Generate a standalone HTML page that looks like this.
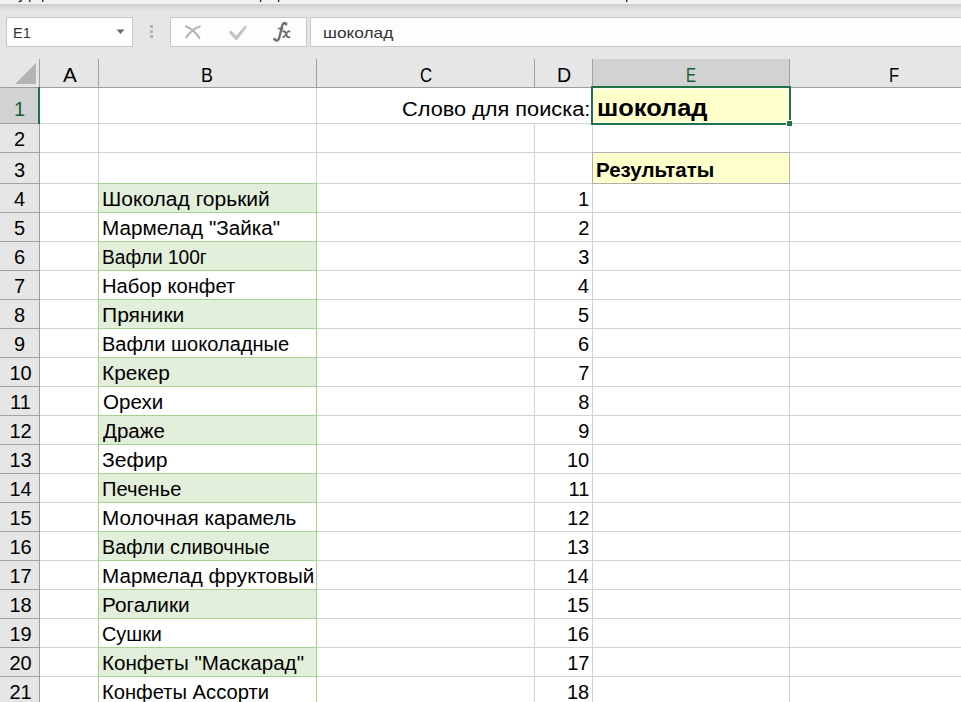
<!DOCTYPE html>
<html><head><meta charset="utf-8"><style>
html,body{margin:0;padding:0;}
body{width:961px;height:702px;overflow:hidden;position:relative;background:#e6e6e6;font-family:"Liberation Sans", sans-serif;}
</style></head><body>
<div style="position:absolute;left:0px;top:0px;width:961px;height:4px;background:#f3f2f1"></div>
<div style="position:absolute;left:0px;top:4px;width:961px;height:1px;background:#cccbca"></div>
<div style="position:absolute;left:0px;top:5px;width:961px;height:1px;background:#d2d2d2"></div>
<div style="position:absolute;left:0px;top:6px;width:961px;height:1px;background:#d6d6d6"></div>
<div style="position:absolute;left:0px;top:7px;width:961px;height:1px;background:#dadada"></div>
<div style="position:absolute;left:0px;top:8px;width:961px;height:1px;background:#dfdfdf"></div>
<div style="position:absolute;left:0px;top:9px;width:961px;height:1px;background:#e2e2e2"></div>
<svg style="position:absolute;left:0;top:0" width="961" height="4"><g stroke="#2a2a2a" stroke-width="1.4" fill="none" stroke-linecap="round"><path d="M21.3 -1 Q21.6 1.6 19.2 1.5"/><path d="M29.8 -1 L29.8 1.4"/><path d="M42.7 -1 L42.7 1.4"/><path d="M260.6 -1 L260.6 1.4"/><path d="M278.6 -1 L278.6 1.4"/><path d="M626.7 -1 L626.7 1.6"/></g></svg>
<div style="position:absolute;left:6px;top:17px;width:127px;height:30px;background:#fff;border:1px solid #c6c6c6;box-sizing:border-box"></div>
<div style="position:absolute;left:12.62px;top:33.23px;height:0;line-height:0;font-size:15.5px;color:#333;white-space:pre;transform:scaleX(0.9392);transform-origin:left 0;">E1</div>
<svg style="position:absolute;left:116px;top:29px" width="10" height="6"><path d="M0.5 0.5 L8.5 0.5 L4.5 5 Z" fill="#666"/></svg>
<div style="position:absolute;left:150px;top:25px;width:3px;height:3px;background:#b4b4b4"></div>
<div style="position:absolute;left:150px;top:30px;width:3px;height:3px;background:#b4b4b4"></div>
<div style="position:absolute;left:150px;top:35px;width:3px;height:3px;background:#b4b4b4"></div>
<div style="position:absolute;left:170px;top:17px;width:137px;height:30px;background:#fdfdfd;border:1px solid #c6c6c6;box-sizing:border-box"></div>
<svg style="position:absolute;left:180px;top:20px" width="25" height="25"><g stroke="#b6b6b6" fill="none" stroke-linecap="round"><path d="M6.1 6.4 Q12.9 8.6 19.4 17.9" stroke-width="2.1"/><path d="M6.3 17.4 Q12.5 8.7 19.8 6.6" stroke-width="2.1"/></g></svg>
<svg style="position:absolute;left:226px;top:20px" width="25" height="25"><g fill="#c2c2c2" stroke="#c2c2c2" stroke-linecap="round" stroke-linejoin="round"><path d="M4.9 12.5 L10.3 18.3" stroke-width="3.3" fill="none"/><path d="M9.21 17.32 L19.28 5.89 L20.52 6.9 L11.39 19.08 Z" stroke-width="0.8"/></g></svg>
<svg style="position:absolute;left:260px;top:15px" width="40" height="32"><g stroke="#6e6e6e" fill="none" stroke-linecap="round"><path d="M14.6 24.0 Q15.2 25.9 17.2 25.5 Q18.9 25.0 19.6 21.5 L21.6 12.5 Q22.6 8.2 24.6 7.9 Q25.9 7.8 26.2 8.9" stroke-width="2.3"/><path d="M18.4 13.5 L22.8 13.5" stroke-width="1.5"/><path d="M23.0 16.4 Q24.5 15.6 25.6 17.6 L27.2 21.6 Q28.0 22.9 29.4 22.0" stroke-width="1.9"/><path d="M29.6 16.6 Q28.6 15.6 27.2 17.3 L24.9 20.9 Q24.0 22.6 23.0 21.9" stroke-width="1.7"/></g><circle cx="14.7" cy="24.2" r="1.3" fill="#6e6e6e"/><circle cx="26.0" cy="9.3" r="1.3" fill="#6e6e6e"/></svg>
<div style="position:absolute;left:310px;top:17px;width:660px;height:30px;background:#fdfdfd;border:1px solid #c6c6c6;box-sizing:border-box"></div>
<div style="position:absolute;left:323.25px;top:32.80px;height:0;line-height:0;font-size:15px;color:#333;white-space:pre;transform:scaleX(1.1537);transform-origin:left 0;">шоколад</div>
<div style="position:absolute;left:0px;top:59px;width:961px;height:28px;background:#e6e6e6"></div>
<svg style="position:absolute;left:0;top:0" width="40" height="90"><path d="M36 63 L36 84 L15 84 Z" fill="#b4b4b4"/></svg>
<div style="position:absolute;left:593px;top:59px;width:196px;height:28px;background:#d2d2d2"></div>
<div style="position:absolute;left:98px;top:59px;width:1px;height:28px;background:#a0a0a0"></div>
<div style="position:absolute;left:62.65px;top:75.07px;height:0;line-height:0;font-size:20px;color:#000;white-space:pre;transform:scaleX(1.0332);transform-origin:left 0;">A</div>
<div style="position:absolute;left:316px;top:59px;width:1px;height:28px;background:#a0a0a0"></div>
<div style="position:absolute;left:201.33px;top:75.07px;height:0;line-height:0;font-size:20px;color:#000;white-space:pre;transform:scaleX(0.8906);transform-origin:left 0;">B</div>
<div style="position:absolute;left:534px;top:59px;width:1px;height:28px;background:#a0a0a0"></div>
<div style="position:absolute;left:419.93px;top:75.07px;height:0;line-height:0;font-size:20px;color:#000;white-space:pre;transform:scaleX(0.8373);transform-origin:left 0;">C</div>
<div style="position:absolute;left:592px;top:59px;width:1px;height:28px;background:#a0a0a0"></div>
<div style="position:absolute;left:556.88px;top:75.07px;height:0;line-height:0;font-size:20px;color:#000;white-space:pre;transform:scaleX(0.9824);transform-origin:left 0;">D</div>
<div style="position:absolute;left:789px;top:59px;width:1px;height:28px;background:#a0a0a0"></div>
<div style="position:absolute;left:1000px;top:59px;width:1px;height:28px;background:#a0a0a0"></div>
<div style="position:absolute;left:888.60px;top:75.07px;height:0;line-height:0;font-size:20px;color:#000;white-space:pre;transform:scaleX(0.8295);transform-origin:left 0;">F</div>
<div style="position:absolute;left:39px;top:59px;width:1px;height:28px;background:#a0a0a0"></div>
<div style="position:absolute;left:0px;top:87px;width:961px;height:1px;background:#9e9e9e"></div>
<div style="position:absolute;left:40px;top:88px;width:921px;height:614px;background:#fff"></div>
<div style="position:absolute;left:0px;top:88px;width:39px;height:614px;background:#e6e6e6"></div>
<div style="position:absolute;left:0px;top:88px;width:39px;height:35px;background:#d2d2d2"></div>
<div style="position:absolute;left:98px;top:88px;width:1px;height:614px;background:#d4d4d4"></div>
<div style="position:absolute;left:316px;top:88px;width:1px;height:614px;background:#d4d4d4"></div>
<div style="position:absolute;left:534px;top:88px;width:1px;height:614px;background:#d4d4d4"></div>
<div style="position:absolute;left:592px;top:88px;width:1px;height:614px;background:#d4d4d4"></div>
<div style="position:absolute;left:789px;top:88px;width:1px;height:614px;background:#d4d4d4"></div>
<div style="position:absolute;left:40px;top:123px;width:921px;height:1px;background:#d4d4d4"></div>
<div style="position:absolute;left:0px;top:123px;width:39px;height:1px;background:#a3a3a3"></div>
<div style="position:absolute;left:40px;top:152px;width:921px;height:1px;background:#d4d4d4"></div>
<div style="position:absolute;left:0px;top:152px;width:39px;height:1px;background:#a3a3a3"></div>
<div style="position:absolute;left:40px;top:183px;width:921px;height:1px;background:#d4d4d4"></div>
<div style="position:absolute;left:0px;top:183px;width:39px;height:1px;background:#a3a3a3"></div>
<div style="position:absolute;left:40px;top:212px;width:921px;height:1px;background:#d4d4d4"></div>
<div style="position:absolute;left:0px;top:212px;width:39px;height:1px;background:#a3a3a3"></div>
<div style="position:absolute;left:40px;top:241px;width:921px;height:1px;background:#d4d4d4"></div>
<div style="position:absolute;left:0px;top:241px;width:39px;height:1px;background:#a3a3a3"></div>
<div style="position:absolute;left:40px;top:270px;width:921px;height:1px;background:#d4d4d4"></div>
<div style="position:absolute;left:0px;top:270px;width:39px;height:1px;background:#a3a3a3"></div>
<div style="position:absolute;left:40px;top:299px;width:921px;height:1px;background:#d4d4d4"></div>
<div style="position:absolute;left:0px;top:299px;width:39px;height:1px;background:#a3a3a3"></div>
<div style="position:absolute;left:40px;top:328px;width:921px;height:1px;background:#d4d4d4"></div>
<div style="position:absolute;left:0px;top:328px;width:39px;height:1px;background:#a3a3a3"></div>
<div style="position:absolute;left:40px;top:357px;width:921px;height:1px;background:#d4d4d4"></div>
<div style="position:absolute;left:0px;top:357px;width:39px;height:1px;background:#a3a3a3"></div>
<div style="position:absolute;left:40px;top:386px;width:921px;height:1px;background:#d4d4d4"></div>
<div style="position:absolute;left:0px;top:386px;width:39px;height:1px;background:#a3a3a3"></div>
<div style="position:absolute;left:40px;top:415px;width:921px;height:1px;background:#d4d4d4"></div>
<div style="position:absolute;left:0px;top:415px;width:39px;height:1px;background:#a3a3a3"></div>
<div style="position:absolute;left:40px;top:444px;width:921px;height:1px;background:#d4d4d4"></div>
<div style="position:absolute;left:0px;top:444px;width:39px;height:1px;background:#a3a3a3"></div>
<div style="position:absolute;left:40px;top:473px;width:921px;height:1px;background:#d4d4d4"></div>
<div style="position:absolute;left:0px;top:473px;width:39px;height:1px;background:#a3a3a3"></div>
<div style="position:absolute;left:40px;top:502px;width:921px;height:1px;background:#d4d4d4"></div>
<div style="position:absolute;left:0px;top:502px;width:39px;height:1px;background:#a3a3a3"></div>
<div style="position:absolute;left:40px;top:531px;width:921px;height:1px;background:#d4d4d4"></div>
<div style="position:absolute;left:0px;top:531px;width:39px;height:1px;background:#a3a3a3"></div>
<div style="position:absolute;left:40px;top:560px;width:921px;height:1px;background:#d4d4d4"></div>
<div style="position:absolute;left:0px;top:560px;width:39px;height:1px;background:#a3a3a3"></div>
<div style="position:absolute;left:40px;top:589px;width:921px;height:1px;background:#d4d4d4"></div>
<div style="position:absolute;left:0px;top:589px;width:39px;height:1px;background:#a3a3a3"></div>
<div style="position:absolute;left:40px;top:618px;width:921px;height:1px;background:#d4d4d4"></div>
<div style="position:absolute;left:0px;top:618px;width:39px;height:1px;background:#a3a3a3"></div>
<div style="position:absolute;left:40px;top:647px;width:921px;height:1px;background:#d4d4d4"></div>
<div style="position:absolute;left:0px;top:647px;width:39px;height:1px;background:#a3a3a3"></div>
<div style="position:absolute;left:40px;top:676px;width:921px;height:1px;background:#d4d4d4"></div>
<div style="position:absolute;left:0px;top:676px;width:39px;height:1px;background:#a3a3a3"></div>
<div style="position:absolute;left:39px;top:88px;width:1px;height:614px;background:#9e9e9e"></div>
<div style="position:absolute;left:534px;top:88px;width:1px;height:35px;background:#fff"></div>
<div style="position:absolute;left:38px;top:87px;width:2px;height:37px;background:#217346"></div>
<div style="position:absolute;left:-180.50px;width:400px;text-align:center;top:109.07px;height:0;line-height:0;font-size:20px;color:#155d32;white-space:pre;">1</div>
<div style="position:absolute;left:-180.50px;width:400px;text-align:center;top:139.07px;height:0;line-height:0;font-size:20px;color:#000;white-space:pre;">2</div>
<div style="position:absolute;left:-180.50px;width:400px;text-align:center;top:170.07px;height:0;line-height:0;font-size:20px;color:#000;white-space:pre;">3</div>
<div style="position:absolute;left:-180.50px;width:400px;text-align:center;top:199.07px;height:0;line-height:0;font-size:20px;color:#000;white-space:pre;">4</div>
<div style="position:absolute;left:-180.50px;width:400px;text-align:center;top:228.07px;height:0;line-height:0;font-size:20px;color:#000;white-space:pre;">5</div>
<div style="position:absolute;left:-180.50px;width:400px;text-align:center;top:257.07px;height:0;line-height:0;font-size:20px;color:#000;white-space:pre;">6</div>
<div style="position:absolute;left:-180.50px;width:400px;text-align:center;top:286.07px;height:0;line-height:0;font-size:20px;color:#000;white-space:pre;">7</div>
<div style="position:absolute;left:-180.50px;width:400px;text-align:center;top:315.07px;height:0;line-height:0;font-size:20px;color:#000;white-space:pre;">8</div>
<div style="position:absolute;left:-180.50px;width:400px;text-align:center;top:344.07px;height:0;line-height:0;font-size:20px;color:#000;white-space:pre;">9</div>
<div style="position:absolute;left:-179.50px;width:400px;text-align:center;top:373.07px;height:0;line-height:0;font-size:20px;color:#000;white-space:pre;">10</div>
<div style="position:absolute;left:-179.50px;width:400px;text-align:center;top:402.07px;height:0;line-height:0;font-size:20px;color:#000;white-space:pre;">11</div>
<div style="position:absolute;left:-179.50px;width:400px;text-align:center;top:431.07px;height:0;line-height:0;font-size:20px;color:#000;white-space:pre;">12</div>
<div style="position:absolute;left:-179.50px;width:400px;text-align:center;top:460.07px;height:0;line-height:0;font-size:20px;color:#000;white-space:pre;">13</div>
<div style="position:absolute;left:-179.50px;width:400px;text-align:center;top:489.07px;height:0;line-height:0;font-size:20px;color:#000;white-space:pre;">14</div>
<div style="position:absolute;left:-179.50px;width:400px;text-align:center;top:518.07px;height:0;line-height:0;font-size:20px;color:#000;white-space:pre;">15</div>
<div style="position:absolute;left:-179.50px;width:400px;text-align:center;top:547.07px;height:0;line-height:0;font-size:20px;color:#000;white-space:pre;">16</div>
<div style="position:absolute;left:-179.50px;width:400px;text-align:center;top:576.07px;height:0;line-height:0;font-size:20px;color:#000;white-space:pre;">17</div>
<div style="position:absolute;left:-179.50px;width:400px;text-align:center;top:605.07px;height:0;line-height:0;font-size:20px;color:#000;white-space:pre;">18</div>
<div style="position:absolute;left:-179.50px;width:400px;text-align:center;top:634.07px;height:0;line-height:0;font-size:20px;color:#000;white-space:pre;">19</div>
<div style="position:absolute;left:-179.50px;width:400px;text-align:center;top:663.07px;height:0;line-height:0;font-size:20px;color:#000;white-space:pre;">20</div>
<div style="position:absolute;left:-179.50px;width:400px;text-align:center;top:692.07px;height:0;line-height:0;font-size:20px;color:#000;white-space:pre;">21</div>
<div style="position:absolute;left:98px;top:183px;width:219px;height:30px;background:#e2efda;border:1px solid #a9d08e;box-sizing:border-box"></div>
<div style="position:absolute;left:101.76px;top:199.07px;height:0;line-height:0;font-size:20px;color:#000;white-space:pre;transform:scaleX(1.0505);transform-origin:left 0;">Шоколад горький</div>
<div style="position:absolute;right:371.82px;top:199.07px;height:0;line-height:0;font-size:20px;color:#000;white-space:pre;">1</div>
<div style="position:absolute;left:98px;top:212px;width:219px;height:30px;background:#ffffff;border:1px solid #a9d08e;box-sizing:border-box"></div>
<div style="position:absolute;left:101.76px;top:228.07px;height:0;line-height:0;font-size:20px;color:#000;white-space:pre;transform:scaleX(1.0341);transform-origin:left 0;">Мармелад "Зайка"</div>
<div style="position:absolute;right:371.76px;top:228.07px;height:0;line-height:0;font-size:20px;color:#000;white-space:pre;">2</div>
<div style="position:absolute;left:98px;top:241px;width:219px;height:30px;background:#e2efda;border:1px solid #a9d08e;box-sizing:border-box"></div>
<div style="position:absolute;left:102.08px;top:257.07px;height:0;line-height:0;font-size:20px;color:#000;white-space:pre;transform:scaleX(0.9570);transform-origin:left 0;">Вафли 100г</div>
<div style="position:absolute;right:371.76px;top:257.07px;height:0;line-height:0;font-size:20px;color:#000;white-space:pre;">3</div>
<div style="position:absolute;left:98px;top:270px;width:219px;height:30px;background:#ffffff;border:1px solid #a9d08e;box-sizing:border-box"></div>
<div style="position:absolute;left:101.91px;top:286.07px;height:0;line-height:0;font-size:20px;color:#000;white-space:pre;transform:scaleX(1.0091);transform-origin:left 0;">Набор конфет</div>
<div style="position:absolute;right:372.18px;top:286.07px;height:0;line-height:0;font-size:20px;color:#000;white-space:pre;">4</div>
<div style="position:absolute;left:98px;top:299px;width:219px;height:30px;background:#e2efda;border:1px solid #a9d08e;box-sizing:border-box"></div>
<div style="position:absolute;left:101.76px;top:315.07px;height:0;line-height:0;font-size:20px;color:#000;white-space:pre;transform:scaleX(1.0525);transform-origin:left 0;">Пряники</div>
<div style="position:absolute;right:371.88px;top:315.07px;height:0;line-height:0;font-size:20px;color:#000;white-space:pre;">5</div>
<div style="position:absolute;left:98px;top:328px;width:219px;height:30px;background:#ffffff;border:1px solid #a9d08e;box-sizing:border-box"></div>
<div style="position:absolute;left:101.91px;top:344.07px;height:0;line-height:0;font-size:20px;color:#000;white-space:pre;transform:scaleX(1.0021);transform-origin:left 0;">Вафли шоколадные</div>
<div style="position:absolute;right:371.80px;top:344.07px;height:0;line-height:0;font-size:20px;color:#000;white-space:pre;">6</div>
<div style="position:absolute;left:98px;top:357px;width:219px;height:30px;background:#e2efda;border:1px solid #a9d08e;box-sizing:border-box"></div>
<div style="position:absolute;left:101.76px;top:373.07px;height:0;line-height:0;font-size:20px;color:#000;white-space:pre;transform:scaleX(1.0410);transform-origin:left 0;">Крекер</div>
<div style="position:absolute;right:371.76px;top:373.07px;height:0;line-height:0;font-size:20px;color:#000;white-space:pre;">7</div>
<div style="position:absolute;left:98px;top:386px;width:219px;height:30px;background:#ffffff;border:1px solid #a9d08e;box-sizing:border-box"></div>
<div style="position:absolute;left:102.52px;top:402.07px;height:0;line-height:0;font-size:20px;color:#000;white-space:pre;transform:scaleX(1.0279);transform-origin:left 0;">Орехи</div>
<div style="position:absolute;right:371.76px;top:402.07px;height:0;line-height:0;font-size:20px;color:#000;white-space:pre;">8</div>
<div style="position:absolute;left:98px;top:415px;width:219px;height:30px;background:#e2efda;border:1px solid #a9d08e;box-sizing:border-box"></div>
<div style="position:absolute;left:103.24px;top:431.07px;height:0;line-height:0;font-size:20px;color:#000;white-space:pre;transform:scaleX(1.0268);transform-origin:left 0;">Драже</div>
<div style="position:absolute;right:371.67px;top:431.07px;height:0;line-height:0;font-size:20px;color:#000;white-space:pre;">9</div>
<div style="position:absolute;left:98px;top:444px;width:219px;height:30px;background:#ffffff;border:1px solid #a9d08e;box-sizing:border-box"></div>
<div style="position:absolute;left:102.29px;top:460.07px;height:0;line-height:0;font-size:20px;color:#000;white-space:pre;transform:scaleX(1.0573);transform-origin:left 0;">Зефир</div>
<div style="position:absolute;right:371.85px;top:460.07px;height:0;line-height:0;font-size:20px;color:#000;white-space:pre;">10</div>
<div style="position:absolute;left:98px;top:473px;width:219px;height:30px;background:#e2efda;border:1px solid #a9d08e;box-sizing:border-box"></div>
<div style="position:absolute;left:101.93px;top:489.07px;height:0;line-height:0;font-size:20px;color:#000;white-space:pre;transform:scaleX(1.0044);transform-origin:left 0;">Печенье</div>
<div style="position:absolute;right:371.64px;top:489.07px;height:0;line-height:0;font-size:20px;color:#000;white-space:pre;">11</div>
<div style="position:absolute;left:98px;top:502px;width:219px;height:30px;background:#ffffff;border:1px solid #a9d08e;box-sizing:border-box"></div>
<div style="position:absolute;left:101.76px;top:518.07px;height:0;line-height:0;font-size:20px;color:#000;white-space:pre;transform:scaleX(1.0333);transform-origin:left 0;">Молочная карамель</div>
<div style="position:absolute;right:371.61px;top:518.07px;height:0;line-height:0;font-size:20px;color:#000;white-space:pre;">12</div>
<div style="position:absolute;left:98px;top:531px;width:219px;height:30px;background:#e2efda;border:1px solid #a9d08e;box-sizing:border-box"></div>
<div style="position:absolute;left:101.99px;top:547.07px;height:0;line-height:0;font-size:20px;color:#000;white-space:pre;transform:scaleX(0.9881);transform-origin:left 0;">Вафли сливочные</div>
<div style="position:absolute;right:371.78px;top:547.07px;height:0;line-height:0;font-size:20px;color:#000;white-space:pre;">13</div>
<div style="position:absolute;left:98px;top:560px;width:219px;height:30px;background:#ffffff;border:1px solid #a9d08e;box-sizing:border-box"></div>
<div style="position:absolute;left:101.82px;top:576.07px;height:0;line-height:0;font-size:20px;color:#000;white-space:pre;transform:scaleX(1.0314);transform-origin:left 0;">Мармелад фруктовый</div>
<div style="position:absolute;right:372.18px;top:576.07px;height:0;line-height:0;font-size:20px;color:#000;white-space:pre;">14</div>
<div style="position:absolute;left:98px;top:589px;width:219px;height:30px;background:#e2efda;border:1px solid #a9d08e;box-sizing:border-box"></div>
<div style="position:absolute;left:101.76px;top:605.07px;height:0;line-height:0;font-size:20px;color:#000;white-space:pre;transform:scaleX(1.0397);transform-origin:left 0;">Рогалики</div>
<div style="position:absolute;right:371.93px;top:605.07px;height:0;line-height:0;font-size:20px;color:#000;white-space:pre;">15</div>
<div style="position:absolute;left:98px;top:618px;width:219px;height:30px;background:#ffffff;border:1px solid #a9d08e;box-sizing:border-box"></div>
<div style="position:absolute;left:102.43px;top:634.07px;height:0;line-height:0;font-size:20px;color:#000;white-space:pre;transform:scaleX(0.9919);transform-origin:left 0;">Сушки</div>
<div style="position:absolute;right:371.79px;top:634.07px;height:0;line-height:0;font-size:20px;color:#000;white-space:pre;">16</div>
<div style="position:absolute;left:98px;top:647px;width:219px;height:30px;background:#e2efda;border:1px solid #a9d08e;box-sizing:border-box"></div>
<div style="position:absolute;left:101.83px;top:663.07px;height:0;line-height:0;font-size:20px;color:#000;white-space:pre;transform:scaleX(1.0289);transform-origin:left 0;">Конфеты "Маскарад"</div>
<div style="position:absolute;right:371.61px;top:663.07px;height:0;line-height:0;font-size:20px;color:#000;white-space:pre;">17</div>
<div style="position:absolute;left:98px;top:676px;width:219px;height:30px;background:#ffffff;border:1px solid #a9d08e;box-sizing:border-box"></div>
<div style="position:absolute;left:101.91px;top:692.07px;height:0;line-height:0;font-size:20px;color:#000;white-space:pre;transform:scaleX(1.0087);transform-origin:left 0;">Конфеты Ассорти</div>
<div style="position:absolute;right:371.78px;top:692.07px;height:0;line-height:0;font-size:20px;color:#000;white-space:pre;">18</div>
<div style="position:absolute;right:370.91px;top:109.07px;height:0;line-height:0;font-size:20px;color:#000;white-space:pre;transform:scaleX(1.0862);transform-origin:right 0;">Слово для поиска:</div>
<div style="position:absolute;left:591px;top:86px;width:200px;height:39px;background:#217346"></div>
<div style="position:absolute;left:593px;top:88px;width:196px;height:35px;background:#fff"></div>
<div style="position:absolute;left:594px;top:89px;width:194px;height:33px;background:#ffffcc"></div>
<div style="position:absolute;left:596.77px;top:107.68px;height:0;line-height:0;font-size:24px;font-weight:bold;color:#000;white-space:pre;transform:scaleX(1.0602);transform-origin:left 0;">шоколад</div>
<div style="position:absolute;left:786px;top:120px;width:6px;height:6px;background:#fff"></div>
<div style="position:absolute;left:787px;top:121px;width:5px;height:5px;background:#217346"></div>
<div style="position:absolute;left:593px;top:59px;width:196px;height:27px;background:#d2d2d2"></div>
<div style="position:absolute;left:686.16px;top:75.07px;height:0;line-height:0;font-size:20px;color:#155d32;white-space:pre;transform:scaleX(0.7484);transform-origin:left 0;">E</div>
<div style="position:absolute;left:592px;top:152px;width:198px;height:32px;background:#ffffcc;border:1px solid #b0b0b0;box-sizing:border-box"></div>
<div style="position:absolute;left:596.32px;top:170.07px;height:0;line-height:0;font-size:20px;font-weight:bold;color:#000;white-space:pre;transform:scaleX(1.0251);transform-origin:left 0;">Результаты</div>
</body></html>
